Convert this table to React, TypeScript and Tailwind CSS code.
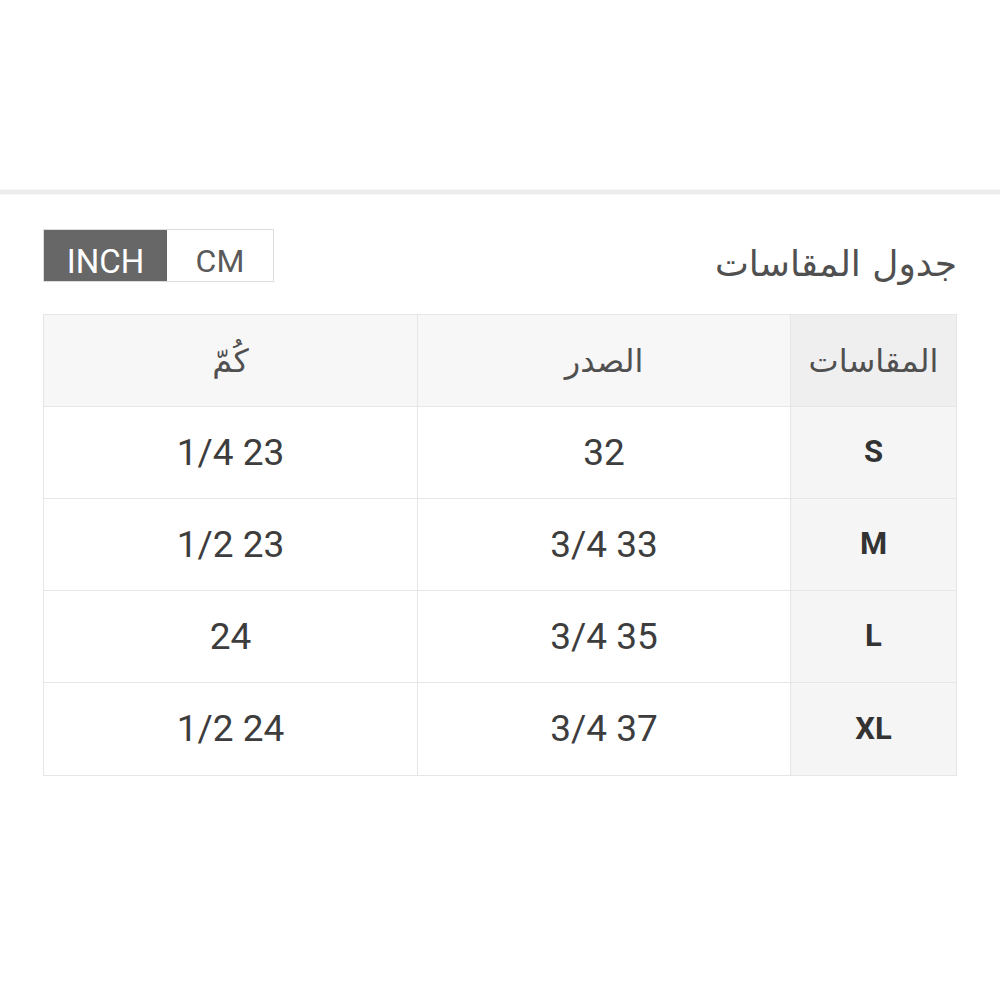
const rows = [
	{ size: "S", chest: "32", sleeve: "1/4 23" },
	{ size: "M", chest: "3/4 33", sleeve: "1/2 23" },
	{ size: "L", chest: "3/4 35", sleeve: "24" },
	{ size: "XL", chest: "3/4 37", sleeve: "1/2 24" },
];

const arabic = "font-['DejaVu_Sans','Noto_Sans_CJK_SC',sans-serif]";
const latin = "font-['Roboto','Liberation_Sans',sans-serif]";

export default function App() {
	return (
		<main className="min-h-screen w-[1000px] bg-white">
			<div className="h-[189px]" />
			<div className="h-[6px] border-y border-[#f6f6f6] bg-[#ececec]" />

			<div className="px-[43px] pt-[33px]">
				<div className="flex items-center justify-between">
					<div className={`flex h-[53px] border border-[#dcdcdc] ${latin}`}>
						<button
							type="button"
							className="flex w-[123px] items-center justify-center bg-[#676767] pt-[12px] text-[33px] leading-none text-white"
						>
							INCH
						</button>
						<button
							type="button"
							className="flex w-[106px] items-center justify-center bg-white pt-[12px] text-[32px] leading-none text-[#5a5a5a]"
						>
							CM
						</button>
					</div>
					<h2 dir="rtl" className={`mt-[18px] text-[36px] leading-none text-[#505050] ${arabic}`}>
						جدول المقاسات
					</h2>
				</div>

				<div className="mt-[32px] grid grid-cols-[374px_373px_1fr] border border-[#e6e6e6]">
					<div className="flex h-[92px] items-center justify-center border-r border-b border-[#e6e6e6] bg-[#f7f7f7]">
						<span dir="rtl" className={`text-[32px] text-[#505050] ${arabic}`}>كُمّ</span>
					</div>
					<div className="flex h-[92px] items-center justify-center border-r border-b border-[#e6e6e6] bg-[#f7f7f7]">
						<span dir="rtl" className={`text-[32px] text-[#505050] ${arabic}`}>الصدر</span>
					</div>
					<div className="flex h-[92px] items-center justify-center border-b border-[#e6e6e6] bg-[#efefef]">
						<span dir="rtl" className={`text-[32px] text-[#505050] ${arabic}`}>المقاسات</span>
					</div>

					{rows.map((row, i) => {
						const last = i === rows.length - 1;
						const rowBorder = last ? "" : "border-b";
						return [
							<div
								key={`${row.size}-sleeve`}
								className={`flex h-[92px] items-center justify-center border-r ${rowBorder} border-[#e6e6e6] text-[37px] text-[#3d3d3d] ${latin}`}
							>
								{row.sleeve}
							</div>,
							<div
								key={`${row.size}-chest`}
								className={`flex h-[92px] items-center justify-center border-r ${rowBorder} border-[#e6e6e6] text-[37px] text-[#3d3d3d] ${latin}`}
							>
								{row.chest}
							</div>,
							<div
								key={`${row.size}-size`}
								className={`flex h-[92px] items-center justify-center ${rowBorder} border-[#e6e6e6] bg-[#f5f5f5] text-[31px] font-bold text-[#333] ${latin}`}
							>
								{row.size}
							</div>,
						];
					})}
				</div>
			</div>
		</main>
	);
}
